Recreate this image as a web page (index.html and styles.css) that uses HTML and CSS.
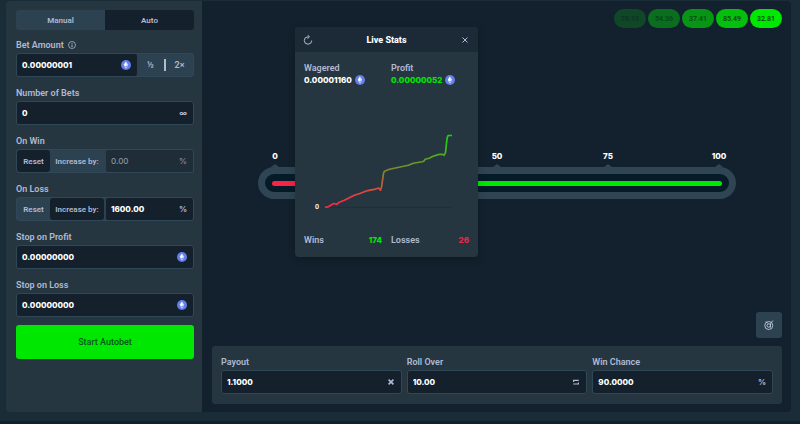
FILE: index.html
```html
<!DOCTYPE html>
<html lang="en">
<head>
  <meta charset="utf-8">
  <meta name="viewport" content="width=device-width, initial-scale=1">
  <title>Dice</title>
  <link rel="stylesheet" href="styles.css">
</head>
<body>
  <svg class="sprite" aria-hidden="true">
    <symbol id="coin" viewBox="0 0 20 20">
      <circle cx="10" cy="10" r="10" fill="#627eea"/>
      <path d="M10 3 L14.5 10.2 L10 12.8 L5.5 10.2 Z" fill="#dfe5fb"/>
      <path d="M10 14 L14.5 11.5 L10 17.5 L5.5 11.5 Z" fill="#c0cbf7"/>
      <path d="M10 3 L10 12.8 L5.5 10.2 Z" fill="#ffffff"/>
    </symbol>
  </svg>

  <div class="game">
    <form class="sidebar">
      <div class="tabs">
        <button type="button" class="tab">Manual</button>
        <button type="button" class="tab active">Auto</button>
      </div>

      <label class="label" for="bet-amount">Bet Amount
        <svg class="info" viewBox="0 0 16 16"><circle cx="8" cy="8" r="7" fill="none" stroke="#b1bad3" stroke-width="1.5"/><path d="M8 7v5M8 4v1.5" stroke="#b1bad3" stroke-width="2"/></svg>
      </label>
      <div class="group">
        <div class="field">
          <input type="text" id="bet-amount" value="0.00000001">
          <svg class="coin"><use href="#coin"/></svg>
        </div>
        <div class="multiply">
          <button type="button">½</button>
          <button type="button">2×</button>
        </div>
      </div>

      <label class="label" for="bets">Number of Bets</label>
      <div class="group">
        <div class="field">
          <input type="text" id="bets" value="0">
          <span class="unit">∞</span>
        </div>
      </div>

      <label class="label" for="on-win">On Win</label>
      <div class="group">
        <button type="button" class="toggle active">Reset</button>
        <button type="button" class="toggle wide">Increase by:</button>
        <div class="field disabled">
          <input type="text" id="on-win" value="0.00" disabled>
          <span class="unit">%</span>
        </div>
      </div>

      <label class="label" for="on-loss">On Loss</label>
      <div class="group">
        <button type="button" class="toggle">Reset</button>
        <button type="button" class="toggle wide active">Increase by:</button>
        <div class="field">
          <input type="text" id="on-loss" value="1600.00">
          <span class="unit">%</span>
        </div>
      </div>

      <label class="label" for="stop-profit">Stop on Profit</label>
      <div class="group">
        <div class="field">
          <input type="text" id="stop-profit" value="0.00000000">
          <svg class="coin"><use href="#coin"/></svg>
        </div>
      </div>

      <label class="label" for="stop-loss">Stop on Loss</label>
      <div class="group">
        <div class="field">
          <input type="text" id="stop-loss" value="0.00000000">
          <svg class="coin"><use href="#coin"/></svg>
        </div>
      </div>

      <button type="button" class="start">Start Autobet</button>
    </form>

    <main class="stage">
      <div class="results">
        <button type="button" class="result r1">76.13</button>
        <button type="button" class="result r2">54.36</button>
        <button type="button" class="result r3">37.41</button>
        <button type="button" class="result r4">85.49</button>
        <button type="button" class="result r5">32.81</button>
      </div>

      <div class="dice">
        <div class="scale">
          <span>0</span><span>25</span><span>50</span><span>75</span><span>100</span>
        </div>
        <div class="track">
          <input type="range" min="0" max="100" value="10" aria-label="Roll over">
        </div>
      </div>

      <button type="button" class="seed" aria-label="Fairness">
        <svg viewBox="0 0 20 20" fill="none" stroke="#c3cbdf" stroke-width="1.8"><circle cx="9.5" cy="11" r="8"/><circle cx="9.5" cy="11" r="3.5"/><path d="M4 3l4 4M18 1l-5 6v8"/></svg>
      </button>

      <div class="settings">
        <div class="setting">
          <label class="label" for="payout">Payout</label>
          <div class="group"><div class="field">
            <input type="text" id="payout" value="1.1000">
            <svg class="icon" viewBox="0 0 10 10"><path d="M2 2l6 6M8 2l-6 6" stroke="#b1bad3" stroke-width="2"/></svg>
          </div></div>
        </div>
        <div class="setting">
          <label class="label" for="roll">Roll Over</label>
          <div class="group"><div class="field">
            <input type="text" id="roll" value="10.00">
            <svg class="icon" viewBox="0 0 10 10"><path d="M2 5V3h6.500M1.500 7.500H8v-2" fill="none" stroke="#b1bad3" stroke-width="1.500"/></svg>
          </div></div>
        </div>
        <div class="setting">
          <label class="label" for="chance">Win Chance</label>
          <div class="group"><div class="field">
            <input type="text" id="chance" value="90.0000">
            <span class="unit">%</span>
          </div></div>
        </div>
      </div>
    </main>
  </div>

  <div class="page-bottom"></div>

  <section class="stats">
    <header class="stats-head">
      <button type="button" aria-label="Reset stats">
        <svg viewBox="0 0 10 10" fill="none" stroke="#b1bad3"><path d="M5.500 1.800H5A3.700 3.700 0 1 0 8.700 5.500M4.500 0l2 1.800-2 1.800"/></svg>
      </button>
      <h2>Live Stats</h2>
      <button type="button" aria-label="Close">
        <svg viewBox="0 0 10 10" fill="none" stroke="#b1bad3"><path d="M2.500 2.500l5 5M7.500 2.500l-5 5"/></svg>
      </button>
    </header>
    <div class="totals">
      <div>
        <span class="name">Wagered</span>
        <span class="amount">0.00001160 <svg class="coin"><use href="#coin"/></svg></span>
      </div>
      <div>
        <span class="name">Profit</span>
        <span class="amount green">0.00000052 <svg class="coin"><use href="#coin"/></svg></span>
      </div>
    </div>
    <div class="chart">
      <span class="zero">0</span>
      <svg viewBox="0 0 128 78">
        <defs>
          <linearGradient id="profit-line" gradientUnits="userSpaceOnUse" x1="0" y1="75" x2="0" y2="2">
            <stop offset="0" stop-color="#ff2247"/>
            <stop offset="0.2" stop-color="#e34540"/>
            <stop offset="0.5" stop-color="#86842c"/>
            <stop offset="1" stop-color="#10d910"/>
          </linearGradient>
        </defs>
        <path d="M0 75h127" stroke="#1c2c46"/>
        <path d="M0 75l3-.5 4-2.500 2-1 3 1 2-2 5-2 10-5 6-2 8-3 8-1.500 3-1 2 2 1-3 2-14 1-2 5-2 19-4 5-2 9-1.500 1.500-.5 1.500-2 4-1 4-2 6-2h3l2 1 1.500-3 1.500-14 1-3h4" fill="none" stroke="url(#profit-line)" stroke-width="1.7" stroke-linejoin="round"/>
      </svg>
    </div>
    <div class="counts">
      <div><span>Wins</span><b class="green">174</b></div>
      <div><span>Losses</span><b class="red">26</b></div>
    </div>
  </section>
</body>
</html>
```

FILE: styles.css
```css
* {
  box-sizing: border-box;
}

body {
  display: flex;
  flex-direction: column;
  min-height: 100vh;
  margin: 0;
  background-color: #1a2c38;
  font-family: Roboto, "Liberation Sans", sans-serif;
  font-size: 9px;
  font-weight: 600;
  color: #b1bad3;
}

button,
input {
  margin: 0;
  padding: 0;
  border: none;
  background: none;
  color: inherit;
  font: inherit;
}

button {
  cursor: pointer;
}

.sprite {
  display: none;
}

.game {
  display: flex;
  margin: 1px 9px 9px 6px;
  border-radius: 4px;
  overflow: hidden;
}

.page-bottom {
  flex: 1;
  background-color: #10202d;
}

/* left panel */
.sidebar {
  flex: 0 0 196px;
  display: flex;
  flex-direction: column;
  padding: 9px 8px 53px 10px;
  background-color: #263640;
}

.tabs {
  display: flex;
  height: 20px;
  margin-bottom: 6px;
  border-radius: 3px;
  background-color: #2c4251;
  overflow: hidden;
}

.tab {
  flex: 1;
  font-size: 8px;
}

.tab.active,
.toggle.active {
  background-color: #14202c;
}

.label {
  display: flex;
  align-items: center;
  gap: 4px;
  height: 17px;
}

.info {
  width: 8px;
  height: 8px;
}

.group {
  display: flex;
  height: 24px;
  border: 1px solid #2f4757;
  border-radius: 3px;
  background-color: #2c4251;
}

.sidebar .group {
  margin-bottom: 7px;
}

.field {
  flex: 1;
  display: flex;
  align-items: center;
  min-width: 0;
  padding: 0 6px 0 5px;
  border-radius: 2px;
  background-color: #14202c;
}

.field input,
.amount,
.scale,
.counts b {
  font-family: Inter, "Liberation Sans", sans-serif;
  font-size: 8px;
  font-weight: 800;
}

.field input {
  flex: 1;
  width: 0;
  color: #fff;
}

.field.disabled {
  background-color: #1f2d38;
}

.field.disabled input,
.field.disabled .unit {
  font-weight: 500;
  color: #8b939d;
}

.coin {
  width: 10px;
  height: 10px;
}

.icon {
  width: 8px;
  height: 8px;
}

.unit {
  font-family: Inter, "Liberation Sans", sans-serif;
  font-size: 8px;
  font-weight: 700;
}

.multiply {
  display: flex;
  align-items: center;
  width: 56px;
}

.multiply button {
  flex: 1;
  height: 12px;
}

.multiply button + button {
  border-left: 2px solid #b1bad3;
}

.toggle {
  width: 33px;
  border-radius: 3px;
  font-size: 8px;
}

.toggle.wide {
  width: 54px;
  margin-right: 2px;
}

.start {
  height: 34px;
  margin-top: 1px;
  border-radius: 3px;
  background-color: #00e701;
  font-weight: 500;
  color: #07591c;
}

/* right panel */
.stage {
  flex: 1;
  display: flex;
  flex-direction: column;
  padding: 8px 9px 8px 10px;
  background-color: #12212d;
}

.results {
  display: flex;
  justify-content: flex-end;
  gap: 2px;
}

.result {
  min-width: 32px;
  height: 19px;
  padding: 0 7px;
  border-radius: 10px;
  font-size: 7px;
  font-weight: 500;
  color: #06421b;
}

.r1 { background-color: #0f4727; color: #0e3024; }
.r2 { background-color: #0b6e1e; }
.r3 { background-color: #089516; }
.r4 { background-color: #04bf0b; }
.r5 { background-color: #00e701; }

.dice {
  margin: auto 46px;
  padding-top: 9px;
}

.scale {
  display: flex;
  justify-content: space-between;
  padding: 0 6px;
  color: #fff;
}

.scale span {
  display: flex;
  flex-direction: column;
  align-items: center;
  gap: 2px;
  width: 22px;
  line-height: 12px;
}

.scale span::after {
  content: "";
  border: 4px solid transparent;
  border-top: none;
  border-bottom: 3px solid #2f4553;
}

.track {
  display: flex;
  align-items: center;
  height: 32px;
  padding: 0 7px;
  border: 7px solid #2f4553;
  border-radius: 16px;
  background-color: #051c28;
}

.track input {
  flex: 1;
  height: 5px;
  border-radius: 3px;
  background: linear-gradient(to right, #f92346 10%, #00e701 10%);
  appearance: none;
}

.track input::-webkit-slider-thumb {
  width: 20px;
  height: 20px;
  border-radius: 3px;
  background-color: #1475e1;
  appearance: none;
}

.seed {
  display: flex;
  align-items: center;
  justify-content: center;
  align-self: flex-end;
  width: 26px;
  height: 26px;
  border-radius: 3px;
  background-color: #2c4251;
}

.seed svg {
  width: 10px;
  height: 10px;
}

.settings {
  display: flex;
  gap: 5px;
  margin-top: 8px;
  padding: 7px 9px 10px;
  border-radius: 3px;
  background-color: #263640;
}

.setting {
  flex: 1;
}

/* floating stats window */
.stats {
  position: absolute;
  top: 27px;
  left: 295px;
  width: 183px;
  border-radius: 4px;
  background-color: #263640;
  box-shadow: 0 2px 8px rgba(0, 0, 0, 0.2);
}

.stats-head {
  display: flex;
  align-items: center;
  justify-content: space-between;
  height: 25px;
  padding: 0 8px;
  border-radius: 4px 4px 0 0;
  background-color: #1b2a36;
}

.stats-head h2 {
  margin: 0;
  font-size: 9px;
  font-weight: 800;
  color: #fff;
}

.stats-head button,
.stats-head svg {
  display: block;
  width: 10px;
  height: 10px;
}

.totals,
.counts {
  display: grid;
  grid-template-columns: 1fr 1fr;
  gap: 9px;
  padding: 0 9px;
}

.totals {
  padding-top: 10px;
  line-height: 12px;
}

.name {
  display: block;
}

.amount {
  display: flex;
  align-items: center;
  gap: 3px;
  color: #fff;
}

.green {
  color: #00e701;
}

.red {
  color: #e9264a;
}

.chart {
  display: flex;
  align-items: flex-end;
  margin: 47px 26px 0 20px;
}

.chart svg {
  flex: 1;
}

.zero {
  width: 10px;
  font-size: 7px;
  line-height: 6px;
  color: #fff;
}

.counts {
  padding-top: 24px;
  padding-bottom: 11px;
  line-height: 12px;
}

.counts div {
  display: flex;
  justify-content: space-between;
}
```
